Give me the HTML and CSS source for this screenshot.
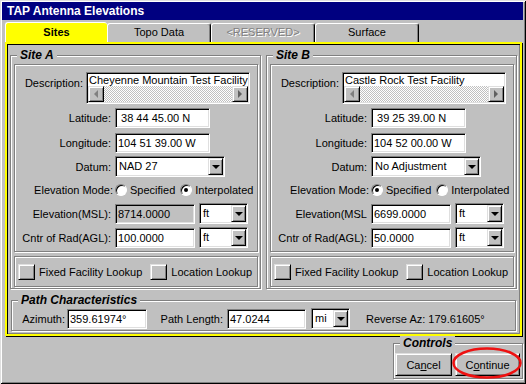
FILE: index.html
```html
<!DOCTYPE html>
<html lang="en">
<head>
    <meta charset="UTF-8">
    <title>TAP Antenna Elevations</title>
    <link rel="stylesheet" href="styles.css">
</head>
<body>
<div class="window">
    <div class="titlebar">TAP Antenna Elevations</div>

    <div class="tabs">
        <div class="tab active">Sites</div>
        <div class="tab">Topo Data</div>
        <div class="tab disabled">&lt;RESERVED&gt;</div>
        <div class="tab">Surface</div>
    </div>

    <div class="panel">
        <div class="sites">
            <!-- Site A -->
            <div class="group site">
                <span class="legend">Site A</span>
                <div class="box fields">
                    <div class="row desc">
                        <span class="lbl">Description:</span>
                        <div class="memo">
                            <div class="memo-text">Cheyenne Mountain Test Facility</div>
                            <div class="hscroll">
                                <span class="sbtn"><i class="arrow-left"></i></span>
                                <span class="track"></span>
                                <span class="sbtn"><i class="arrow-right"></i></span>
                            </div>
                        </div>
                    </div>
                    <div class="row gap4">
                        <span class="lbl">Latitude:</span>
                        <div class="field w95"> 38 44 45.00 N</div>
                    </div>
                    <div class="row gap5">
                        <span class="lbl">Longitude:</span>
                        <div class="field w95">104 51 39.00 W</div>
                    </div>
                    <div class="row">
                        <span class="lbl">Datum:</span>
                        <div class="combo w110"><span class="val">NAD 27</span><span class="drop"></span></div>
                    </div>
                    <div class="row mode">
                        <span class="lbl">Elevation Mode:</span>
                        <span class="radio"></span><span class="opt">Specified</span>
                        <span class="radio checked second"></span><span class="opt">Interpolated</span>
                    </div>
                    <div class="row">
                        <span class="lbl">Elevation(MSL):</span>
                        <div class="field w80 readonly">8714.0000</div>
                        <div class="combo w49 unit"><span class="val">ft</span><span class="drop"></span></div>
                    </div>
                    <div class="row">
                        <span class="lbl">Cntr of Rad(AGL):</span>
                        <div class="field w80">100.0000</div>
                        <div class="combo w49 unit"><span class="val">ft</span><span class="drop"></span></div>
                    </div>
                </div>
                <div class="box lookups">
                    <span class="sqbtn"></span><span class="opt">Fixed Facility Lookup</span>
                    <span class="sqbtn second"></span><span class="opt">Location Lookup</span>
                </div>
            </div>

            <!-- Site B -->
            <div class="group site">
                <span class="legend">Site B</span>
                <div class="box fields">
                    <div class="row desc">
                        <span class="lbl">Description:</span>
                        <div class="memo">
                            <div class="memo-text">Castle Rock Test Facility</div>
                            <div class="hscroll">
                                <span class="sbtn"><i class="arrow-left"></i></span>
                                <span class="track"></span>
                                <span class="sbtn"><i class="arrow-right"></i></span>
                            </div>
                        </div>
                    </div>
                    <div class="row gap4">
                        <span class="lbl">Latitude:</span>
                        <div class="field w95"> 39 25 39.00 N</div>
                    </div>
                    <div class="row gap5">
                        <span class="lbl">Longitude:</span>
                        <div class="field w95">104 52 00.00 W</div>
                    </div>
                    <div class="row">
                        <span class="lbl">Datum:</span>
                        <div class="combo w110"><span class="val">No Adjustment</span><span class="drop"></span></div>
                    </div>
                    <div class="row mode">
                        <span class="lbl">Elevation Mode:</span>
                        <span class="radio checked"></span><span class="opt">Specified</span>
                        <span class="radio second"></span><span class="opt">Interpolated</span>
                    </div>
                    <div class="row">
                        <span class="lbl">Elevation(MSL</span>
                        <div class="field w80">6699.0000</div>
                        <div class="combo w49 unit"><span class="val">ft</span><span class="drop"></span></div>
                    </div>
                    <div class="row">
                        <span class="lbl">Cntr of Rad(AGL):</span>
                        <div class="field w80">50.0000</div>
                        <div class="combo w49 unit"><span class="val">ft</span><span class="drop"></span></div>
                    </div>
                </div>
                <div class="box lookups">
                    <span class="sqbtn"></span><span class="opt">Fixed Facility Lookup</span>
                    <span class="sqbtn second"></span><span class="opt">Location Lookup</span>
                </div>
            </div>
        </div>

        <div class="group path">
            <span class="legend">Path Characteristics</span>
            <div class="path-row">
                <span class="plbl az">Azimuth:</span>
                <div class="field w80">359.61974°</div>
                <span class="plbl len">Path Length:</span>
                <div class="field w79">47.0244</div>
                <div class="combo w39 unit"><span class="val">mi</span><span class="drop"></span></div>
                <span class="reverse">Reverse Az: 179.61605°</span>
            </div>
        </div>
    </div>

    <div class="footer">
        <div class="group controls">
            <span class="legend">Controls</span>
            <button class="btn cancel">Ca<u>n</u>cel</button>
            <button class="btn continue">C<u>o</u>ntinue</button>
            <svg class="circled" width="70" height="32" viewBox="0 0 70 32">
                <ellipse cx="35" cy="16" rx="33.5" ry="14.5" fill="none" stroke="#ee1111" stroke-width="2.5"/>
            </svg>
        </div>
    </div>
</div>
</body>
</html>
```

FILE: styles.css
```css
* {
    box-sizing: border-box;
}

body {
    margin: 0;
    background-color: #c0c0c0;
    font-family: "Liberation Sans", Arial, sans-serif;
    font-size: 11px;
    color: #000;
}

.window {
    width: 526px;
    height: 384px;
    padding: 2px 3px 2px 2px;
    background-color: #c0c0c0;
    box-shadow: inset 1px 1px #dfdfdf, inset -1px -1px #000, inset 2px 2px #fff, inset -2px -2px #808080;
}

.titlebar {
    height: 18px;
    background-color: #000080;
    color: #fff;
    font-weight: bold;
    font-size: 12px;
    line-height: 18px;
    padding-left: 5px;
}

/* tab strip */
.tabs {
    display: flex;
    align-items: flex-end;
    height: 20px;
    margin: 2px 0 0 3px;
}

.tab {
    width: 104px;
    height: 19px;
    line-height: 17px;
    text-align: center;
    border-top: 1px solid #fff;
    border-left: 1px solid #fff;
    border-right: 1px solid #000;
    border-top-left-radius: 3px;
    border-top-right-radius: 3px;
    box-shadow: inset -1px 0 #808080;
}

.tab.active {
    width: 102px;
    height: 20px;
    line-height: 19px;
    background-color: #ffff00;
    font-weight: bold;
    border-right: none;
    box-shadow: none;
}

.tab.disabled {
    color: #808080;
    text-shadow: 1px 1px #fff;
}

.panel {
    width: 517px;
    height: 294px;
    margin-left: 3px;
    padding: 11px 3px 0 3px;
    border: 2px solid #ffff00;
    box-shadow: inset 1px 1px #000, inset -1px -1px #808080, 1px 1px #000;
}

.sites {
    display: flex;
    gap: 5px;
}

/* etched group boxes */
.group {
    position: relative;
    border: 1px solid #808080;
    box-shadow: inset 1px 1px #fff, 1px 1px #fff;
}

.box {
    border: 1px solid #808080;
    box-shadow: inset 1px 1px #fff, 1px 1px #fff;
}

.legend {
    position: absolute;
    top: -8px;
    left: 6px;
    padding: 0 3px;
    background-color: #c0c0c0;
    font-size: 12px;
    font-weight: bold;
    font-style: italic;
    line-height: 14px;
}

.site {
    width: 251px;
    height: 234px;
    padding: 8px 2px 1px 3px;
}

.fields {
    height: 188px;
    padding-top: 7px;
}

.row {
    display: flex;
    align-items: center;
    margin-top: 3px;
}

.row.desc {
    align-items: flex-start;
    margin-top: 0;
}

.row.gap4 {
    margin-top: 4px;
}

.row.gap5 {
    margin-top: 5px;
}

.lbl {
    width: 96px;
    margin-right: 4px;
    text-align: right;
    white-space: nowrap;
}

.row.desc .lbl {
    width: 68px;
    margin-right: 3px;
    padding-top: 5px;
}

.row.mode {
    height: 20px;
}

.row.mode .lbl {
    width: 98px;
    margin-right: 2px;
}

/* sunken controls */
.field,
.combo,
.memo {
    background-color: #fff;
    border: 1px solid;
    border-color: #808080 #fff #fff #808080;
    box-shadow: inset 1px 1px #000, inset -1px -1px #dfdfdf;
}

.field {
    height: 20px;
    padding: 0 2px;
    line-height: 18px;
    white-space: pre;
}

.field.readonly {
    background-color: #c0c0c0;
}

.w95 { width: 95px; }
.w80 { width: 80px; }
.w79 { width: 79px; }
.w110 { width: 110px; }
.w49 { width: 49px; }
.w39 { width: 39px; }

.memo {
    width: 164px;
    height: 32px;
    padding: 1px;
}

.memo-text {
    height: 12px;
    line-height: 12px;
    padding-left: 1px;
    white-space: nowrap;
    overflow: hidden;
}

.hscroll {
    display: flex;
    height: 16px;
}

.track {
    flex: 1;
    background: repeating-conic-gradient(#fff 0 25%, #c0c0c0 0 50%) 0 0 / 2px 2px;
}

.sbtn,
.drop,
.sqbtn,
.btn {
    background-color: #c0c0c0;
    border: 1px solid;
    border-color: #dfdfdf #000 #000 #dfdfdf;
    box-shadow: inset 1px 1px #fff, inset -1px -1px #808080;
}

.sbtn {
    width: 16px;
    display: flex;
    align-items: center;
    justify-content: center;
}

.arrow-left {
    border-right: 4px solid #808080;
    border-top: 4px solid transparent;
    border-bottom: 4px solid transparent;
}

.arrow-right {
    border-left: 4px solid #606060;
    border-top: 4px solid transparent;
    border-bottom: 4px solid transparent;
}

.combo {
    display: flex;
    height: 21px;
    padding: 1px;
}

.combo.unit {
    margin-left: 4px;
}

.combo .val {
    flex: 1;
    padding-left: 2px;
    line-height: 17px;
    white-space: nowrap;
}

.drop {
    width: 15px;
    display: flex;
    align-items: center;
    justify-content: center;
}

.drop::after {
    content: "";
    border-top: 4px solid #000;
    border-left: 4px solid transparent;
    border-right: 4px solid transparent;
}

/* radio buttons */
.radio {
    width: 12px;
    height: 12px;
    border-radius: 50%;
    background-color: #fff;
    border: 1px solid;
    border-color: #808080 #fff #fff #808080;
    box-shadow: inset 1px 1px #000;
    display: flex;
    align-items: center;
    justify-content: center;
}

.radio.checked::after {
    content: "";
    width: 4px;
    height: 4px;
    border-radius: 50%;
    background-color: #000;
}

.radio.second {
    margin-left: 5px;
}

.opt {
    margin-left: 3px;
    white-space: nowrap;
}

.lookups {
    height: 31px;
    margin-top: 4px;
    padding-left: 3px;
    display: flex;
    align-items: center;
}

.sqbtn {
    width: 17px;
    height: 16px;
}

.sqbtn.second {
    margin-left: 8px;
}

.lookups .opt {
    margin-left: 4px;
}

/* path characteristics */
.path {
    width: 505px;
    height: 31px;
    margin: 11px 0 0 1px;
    padding: 7px 0 0 10px;
}

.path-row {
    display: flex;
    align-items: center;
}

.plbl {
    text-align: right;
    white-space: nowrap;
}

.plbl.az {
    width: 43px;
    margin-right: 2px;
}

.plbl.len {
    width: 76px;
    margin-right: 4px;
}

.path .combo.unit {
    margin-left: 5px;
}

.reverse {
    margin-left: 16px;
    white-space: nowrap;
}

/* bottom buttons */
.footer {
    display: flex;
    justify-content: flex-end;
    margin-top: 7px;
}

.controls {
    width: 130px;
    height: 36px;
    padding: 9px 0 0 1px;
    display: flex;
    align-items: flex-start;
}

.btn {
    height: 23px;
    padding: 0;
    font-family: inherit;
    font-size: 11px;
    color: #000;
}

.btn.cancel {
    width: 57px;
}

.btn.continue {
    width: 65px;
    margin-left: 3px;
}

.circled {
    position: absolute;
    left: 58px;
    top: 3px;
}
```
